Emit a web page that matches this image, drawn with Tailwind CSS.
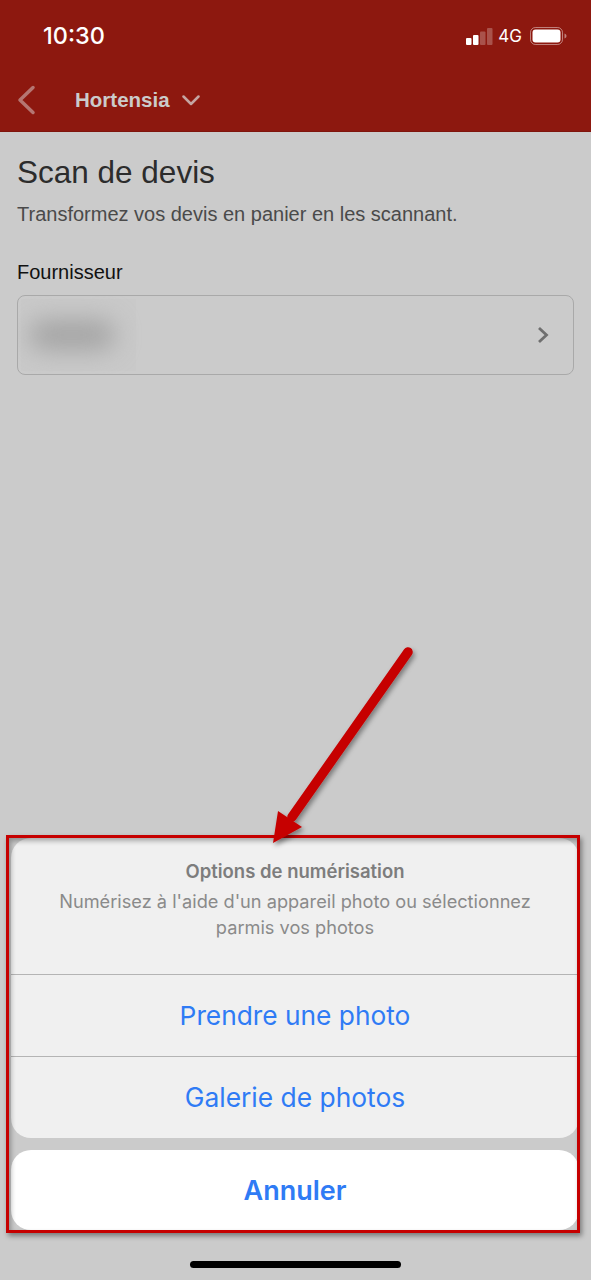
<!DOCTYPE html>
<html lang="fr">
<head>
<meta charset="utf-8">
<script src="https://cdn.jsdelivr.net/npm/@tailwindcss/browser@4"></script>
</head>
<body class="m-0">
<div class="relative w-[591px] h-[1280px] overflow-hidden bg-[#cbcbcb] font-['Liberation_Sans',Arial,sans-serif]">
  <header class="h-[132px] bg-[#8d180f] border-b border-[#7f150d] flex flex-col">
    <div class="h-[72px] pl-[43px] pr-[24px] flex items-center justify-between">
      <span class="text-[23.500px] leading-none text-white font-['Inter',sans-serif] font-medium">10:30</span>
      <div class="flex items-center">
        <svg width="27" height="17" viewBox="0 0 27 17" class="mr-[5px]">
          <rect x="0" y="10" width="5.500" height="7" rx="1" fill="#fff"/>
          <rect x="7" y="7" width="5.500" height="10" rx="1" fill="#fff"/>
          <rect x="14" y="3.500" width="5.500" height="13.500" rx="1" fill="#fff" fill-opacity=".25"/>
          <rect x="21" y="0" width="5.500" height="17" rx="1" fill="#fff" fill-opacity=".25"/>
        </svg>
        <span class="text-[17px] leading-none text-white font-['Inter',sans-serif] mr-[8px]">4G</span>
        <svg width="37" height="18" viewBox="0 0 37 18">
          <rect x=".5" y=".5" width="32" height="17" rx="5" fill="none" stroke="#fff" stroke-opacity=".45"/>
          <rect x="2.500" y="2.500" width="28" height="13" rx="3" fill="#fff"/>
          <path d="M34.500 6.500c1.300.4 2 1.400 2 2.500s-.7 2.100-2 2.500z" fill="#fff" fill-opacity=".45"/>
        </svg>
      </div>
    </div>
    <div class="flex items-center h-[58px] pl-[17px] pb-[2px]">
      <svg width="20" height="30" viewBox="0 0 20 30" class="mr-[38px]"><path d="M16 2.500 3 15l13 12.500" fill="none" stroke="#b57672" stroke-width="3.500" stroke-linecap="round" stroke-linejoin="round"/></svg>
      <span class="text-[20.500px] leading-none font-bold text-[#cbcbcb] mr-[12px]">Hortensia</span>
      <svg width="18" height="11" viewBox="0 0 18 11"><path d="M1.500 1.500 9 9l7.500-7.500" fill="none" stroke="#c5a5a2" stroke-width="2.500" stroke-linecap="round" stroke-linejoin="round"/></svg>
    </div>
  </header>

  <main class="px-[17px]">
    <h1 class="mt-[22px] text-[31.500px] leading-[36px] font-normal text-[#2c2c2c]">Scan de devis</h1>
    <p class="mt-[12px] text-[20px] leading-[24px] text-[#4a4a4a]">Transformez vos devis en panier en les scannant.</p>
    <p class="mt-[34px] text-[20px] leading-[24px] text-[#111111]">Fournisseur</p>
    <div class="mt-[11px] h-[80px] w-[557px] rounded-[8px] border border-[#a9a9a9] flex items-center justify-between pr-[24px] overflow-hidden">
      <div class="h-[72px] w-[115px] ml-[3px] bg-[#c5c5c5]/40 flex items-center pl-[8px]">
        <div class="w-[86px] h-[30px] rounded-full bg-[#a4a4a4] blur-[12px]"></div>
      </div>
      <svg width="12" height="18" viewBox="0 0 12 18"><path d="M2 2l7.500 7L2 16" fill="none" stroke="#6f6f6f" stroke-width="2.800"/></svg>
    </div>
  </main>

  <section class="absolute left-[6px] top-[835px] w-[574px] h-[398px] pt-[3px] pl-[5px] flex flex-col font-['Inter',sans-serif]">
    <div class="w-[568px] h-[300px] bg-[#f0f0f0] rounded-[20px] flex flex-col">
      <div class="h-[137px] pt-[22px] border-b border-[#b4b4b4] text-center">
        <p class="text-[18.500px] leading-[22px] font-semibold text-[#7d7d7d]">Options de numérisation</p>
        <p class="mt-[6px] px-[40px] text-[18.200px] leading-[26px] text-[#8a8a8a]">Numérisez à l'aide d'un appareil photo ou sélectionnez parmis vos photos</p>
      </div>
      <div class="h-[82px] border-b border-[#b4b4b4] flex items-center justify-center text-[26.300px] text-[#2f7bf5]">Prendre une photo</div>
      <div class="h-[81px] flex items-center justify-center text-[26.400px] text-[#2f7bf5]">Galerie de photos</div>
    </div>
    <div class="mt-[12px] w-[568px] h-[80px] pt-[2px] bg-white rounded-[20px] flex items-center justify-center text-[27px] font-semibold text-[#2f7bf5]">Annuler</div>
    <div class="absolute inset-0 border-[3px] border-[#c60000] shadow-[2px_3px_5px_rgba(0,0,0,0.4),inset_2px_3px_5px_rgba(0,0,0,0.3)] pointer-events-none"></div>
  </section>

  <svg class="absolute left-[260px] top-[640px]" width="165" height="215" viewBox="260 640 165 215">
    <defs><filter id="s" x="-20%" y="-20%" width="140%" height="140%"><feDropShadow dx="2" dy="3" stdDeviation="2.500" flood-color="#000" flood-opacity=".4"/></filter></defs>
    <g filter="url(#s)" fill="#c60000">
      <path d="M408 652 292 817" fill="none" stroke="#c60000" stroke-width="9.500" stroke-linecap="round"/>
      <path d="M273 843 278 811 302 827z"/>
    </g>
  </svg>

  <div class="absolute left-[190px] top-[1261px] w-[211px] h-[7px] rounded-full bg-black"></div>
</div>
</body>
</html>
